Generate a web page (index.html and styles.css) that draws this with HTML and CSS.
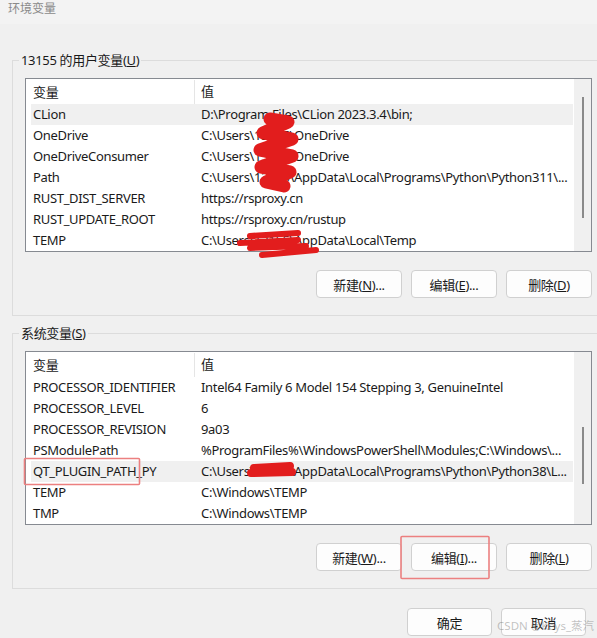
FILE: index.html
```html
<!DOCTYPE html>
<html lang="zh-CN">
<head>
    <meta charset="UTF-8">
    <meta name="viewport" content="width=device-width, initial-scale=1.0">
    <title>环境变量</title>
    <link rel="stylesheet" href="styles.css">
</head>
<body>
<div class="window">

    <div class="titlebar">环境变量</div>

    <!-- 用户变量 -->
    <fieldset class="group group-user">
        <legend>13155 的用户变量(<u>U</u>)</legend>
        <div class="listbox">
            <div class="list">
                <div class="list-head">
                    <span class="head-name">变量</span>
                    <span class="head-value">值</span>
                </div>
                <div class="row selected"><span>CLion</span><span>D:\Program Files\CLion 2023.3.4\bin;</span></div>
                <div class="row"><span>OneDrive</span><span>C:\Users\13155\OneDrive</span></div>
                <div class="row"><span>OneDriveConsumer</span><span>C:\Users\13155\OneDrive</span></div>
                <div class="row"><span>Path</span><span>C:\Users\13155\AppData\Local\Programs\Python\Python311\...</span></div>
                <div class="row"><span>RUST_DIST_SERVER</span><span>https://rsproxy.cn</span></div>
                <div class="row"><span>RUST_UPDATE_ROOT</span><span>https://rsproxy.cn/rustup</span></div>
                <div class="row"><span>TEMP</span><span>C:\Users\13155\AppData\Local\Temp</span></div>
            </div>
            <div class="scrollbar"><div class="thumb thumb-user"></div></div>
        </div>
        <div class="buttons">
            <button class="button">新建(<u>N</u>)...</button>
            <button class="button">编辑(<u>E</u>)...</button>
            <button class="button">删除(<u>D</u>)</button>
        </div>
    </fieldset>

    <!-- 系统变量 -->
    <fieldset class="group group-system">
        <legend>系统变量(<u>S</u>)</legend>
        <div class="listbox">
            <div class="list">
                <div class="list-head">
                    <span class="head-name">变量</span>
                    <span class="head-value">值</span>
                </div>
                <div class="row"><span>PROCESSOR_IDENTIFIER</span><span>Intel64 Family 6 Model 154 Stepping 3, GenuineIntel</span></div>
                <div class="row"><span>PROCESSOR_LEVEL</span><span>6</span></div>
                <div class="row"><span>PROCESSOR_REVISION</span><span>9a03</span></div>
                <div class="row"><span>PSModulePath</span><span>%ProgramFiles%\WindowsPowerShell\Modules;C:\Windows\...</span></div>
                <div class="row selected"><span>QT_PLUGIN_PATH_PY</span><span>C:\Users\13155\AppData\Local\Programs\Python\Python38\L...</span></div>
                <div class="row"><span>TEMP</span><span>C:\Windows\TEMP</span></div>
                <div class="row"><span>TMP</span><span>C:\Windows\TEMP</span></div>
            </div>
            <div class="scrollbar"><div class="thumb thumb-system"></div></div>
        </div>
        <div class="buttons">
            <button class="button">新建(<u>W</u>)...</button>
            <button class="button">编辑(<u>I</u>)...</button>
            <button class="button">删除(<u>L</u>)</button>
        </div>
    </fieldset>

    <div class="footer">
        <button class="button button-footer">确定</button>
        <button class="button button-footer">取消</button>
    </div>

    <!-- 涂抹和标注 -->
    <svg class="marks" width="597" height="638" viewBox="0 0 597 638">
        <g fill="none" stroke="#e21d1d" stroke-linecap="round" stroke-linejoin="round">
            <path stroke-width="13" d="M270 119 L288 122 L263 133 L292 139 L260 150 L292 156 L261 167 L290 172 L266 182 L284 186"/>
            <path stroke-width="6" d="M250 236 L298 233 M240 243 L298 240 L250 248 L306 246 M262 255 L316 250"/>
            <path stroke-width="8" d="M254 468 L290 466 M251 473 L292 472"/>
        </g>
        <g fill="none" stroke="#ec8080" stroke-width="1.6">
            <rect x="24.5" y="458.5" width="115" height="26" rx="1"/>
            <rect x="401" y="536.5" width="88" height="42" rx="1"/>
        </g>
    </svg>

    <div class="watermark">CSDN @Keys_蒸汽</div>
</div>
</body>
</html>
```

FILE: styles.css
```css
body {
    margin: 0;
    background-color: #f0f0f0;
}

.window {
    position: relative;
    width: 597px;
    height: 638px;
    overflow: hidden;
    background-color: #f0f0f0;
    font-family: "Noto Sans", "Noto Sans CJK SC", sans-serif;
    font-size: 13px;
    letter-spacing: -0.33px;
    color: #1a1a1a;
}

.titlebar {
    height: 24px;
    line-height: 18px;
    padding-left: 8px;
    background-color: #f3f3f3;
    color: #8a8a8a;
    font-size: 12px;
    letter-spacing: 0;
}

.group {
    box-sizing: border-box;
    width: 593px;
    margin: 0 0 0 12px;
    padding: 0 12px 17px;
    border: 1px solid #dcdcdc;
}

.group-user {
    margin-top: 28px;
}

.group-system {
    margin-top: 9px;
}

.group legend {
    margin-left: -6px;
    padding: 0 2px;
    line-height: 16px;
}

.listbox {
    display: flex;
    height: 174px;
    margin-top: 10px;
    box-sizing: border-box;
    border: 1px solid #868a91;
    background: white;
}

.list {
    flex: 1;
    padding: 0 1px 0 5px;
    overflow: hidden;
}

.list-head {
    display: grid;
    grid-template-columns: 164px 1fr;
    height: 25px;
    line-height: 24px;
}

.head-name {
    box-sizing: border-box;
    padding-left: 2px;
    margin-top: 1px;
    border-right: 1px solid #e5e5e5;
}

.head-value {
    padding-left: 6px;
}

.row {
    display: grid;
    grid-template-columns: 168px 1fr;
    height: 21px;
    line-height: 21px;
    white-space: nowrap;
    overflow: hidden;
}

.row span {
    padding-left: 2px;
    overflow: hidden;
}

.row.selected {
    background-color: #f0f0f0;
}

.scrollbar {
    width: 17px;
    background-color: #f0f0f0;
}

.thumb {
    width: 2px;
    margin-left: 8px;
    background-color: #8a8a8a;
}

.thumb-user {
    margin-top: 18px;
    height: 121px;
}

.thumb-system {
    margin-top: 75px;
    height: 57px;
}

.buttons {
    display: flex;
    justify-content: flex-end;
    gap: 9px;
    margin-top: 18px;
}

.button {
    width: 86px;
    height: 28px;
    padding: 0;
    border: 1px solid #d0d0d0;
    border-radius: 4px;
    background-color: #fdfdfd;
    font-family: inherit;
    font-size: 13px;
    letter-spacing: inherit;
    color: #1a1a1a;
}

.footer {
    display: flex;
    justify-content: flex-end;
    gap: 9px;
    margin-top: 19px;
    padding-right: 11px;
}

.button-footer {
    width: 85px;
}

.marks {
    position: absolute;
    left: 0;
    top: 0;
    pointer-events: none;
}

.watermark {
    position: absolute;
    right: 3px;
    bottom: 5px;
    font-size: 11.5px;
    letter-spacing: 0;
    color: rgba(120, 120, 120, 0.45);
}
```
